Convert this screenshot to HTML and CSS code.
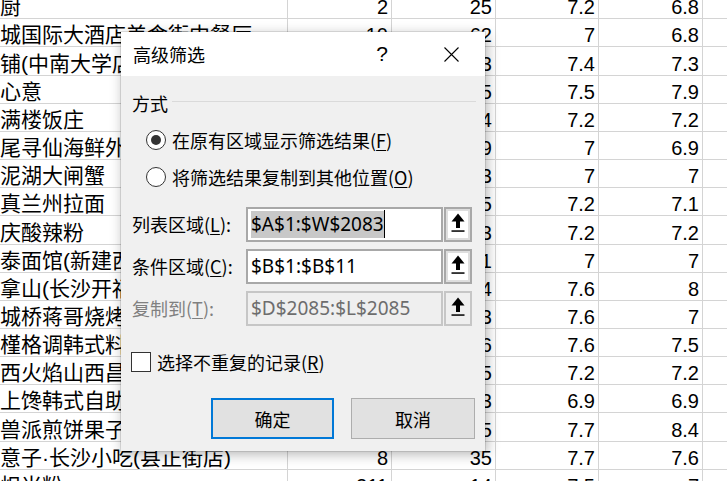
FILE: index.html
```html
<!DOCTYPE html>
<html lang="zh-CN">
<head>
<meta charset="utf-8">
<title>高级筛选</title>
<link rel="stylesheet" href="styles.css">
</head>
<body>
<div class="sheet">
  <div class="row"><div class="c a">厨</div><div class="c n">2</div><div class="c n">25</div><div class="c n">7.2</div><div class="c n">6.8</div><div class="c f"></div></div>
  <div class="row"><div class="c a">城国际大酒店美食街中餐厅</div><div class="c n">10</div><div class="c n">62</div><div class="c n">7</div><div class="c n">6.8</div><div class="c f"></div></div>
  <div class="row"><div class="c a">铺(中南大学店)</div><div class="c n">4</div><div class="c n">23</div><div class="c n">7.4</div><div class="c n">7.3</div><div class="c f"></div></div>
  <div class="row"><div class="c a">心意</div><div class="c n">3</div><div class="c n">45</div><div class="c n">7.5</div><div class="c n">7.9</div><div class="c f"></div></div>
  <div class="row"><div class="c a">满楼饭庄</div><div class="c n">6</div><div class="c n">14</div><div class="c n">7.2</div><div class="c n">7.2</div><div class="c f"></div></div>
  <div class="row"><div class="c a">尾寻仙海鲜外卖</div><div class="c n">2</div><div class="c n">39</div><div class="c n">7</div><div class="c n">6.9</div><div class="c f"></div></div>
  <div class="row"><div class="c a">泥湖大闸蟹</div><div class="c n">5</div><div class="c n">13</div><div class="c n">7</div><div class="c n">7</div><div class="c f"></div></div>
  <div class="row"><div class="c a">真兰州拉面</div><div class="c n">7</div><div class="c n">15</div><div class="c n">7.2</div><div class="c n">7.1</div><div class="c f"></div></div>
  <div class="row"><div class="c a">庆酸辣粉</div><div class="c n">3</div><div class="c n">33</div><div class="c n">7.2</div><div class="c n">7.2</div><div class="c f"></div></div>
  <div class="row"><div class="c a">泰面馆(新建西路店)</div><div class="c n">9</div><div class="c n">11</div><div class="c n">7</div><div class="c n">7</div><div class="c f"></div></div>
  <div class="row"><div class="c a">拿山(长沙开福店)</div><div class="c n">4</div><div class="c n">24</div><div class="c n">7.6</div><div class="c n">8</div><div class="c f"></div></div>
  <div class="row"><div class="c a">城桥蒋哥烧烤</div><div class="c n">6</div><div class="c n">13</div><div class="c n">7.6</div><div class="c n">7</div><div class="c f"></div></div>
  <div class="row"><div class="c a">槿格调韩式料理</div><div class="c n">2</div><div class="c n">16</div><div class="c n">7.6</div><div class="c n">7.5</div><div class="c f"></div></div>
  <div class="row"><div class="c a">西火焰山西昌烧烤</div><div class="c n">8</div><div class="c n">25</div><div class="c n">7.2</div><div class="c n">7.2</div><div class="c f"></div></div>
  <div class="row"><div class="c a">上馋韩式自助烤肉</div><div class="c n">5</div><div class="c n">53</div><div class="c n">6.9</div><div class="c n">6.9</div><div class="c f"></div></div>
  <div class="row"><div class="c a">兽派煎饼果子</div><div class="c n">3</div><div class="c n">15</div><div class="c n">7.7</div><div class="c n">8.4</div><div class="c f"></div></div>
  <div class="row"><div class="c a">意子·长沙小吃(县正街店)</div><div class="c n">8</div><div class="c n">35</div><div class="c n">7.7</div><div class="c n">7.6</div><div class="c f"></div></div>
  <div class="row"><div class="c a">炽米粉</div><div class="c n">211</div><div class="c n">14</div><div class="c n">7.5</div><div class="c n">7</div><div class="c f"></div></div>
</div>

<div class="dlg">
  <div class="titlebar">
    <span class="title">高级筛选</span>
    <span class="help">?</span>
    <svg class="close" width="15" height="15" viewBox="0 0 15 15"><path d="M0.5 0.5 L14.5 14.5 M14.5 0.5 L0.5 14.5" stroke="#000" stroke-width="1.1" fill="none"/></svg>
  </div>
  <div class="body">
    <div class="group"><span>方式</span><div class="gline"></div></div>
    <div class="opt r1"><span class="radio on"></span><span>在原有区域显示筛选结果(<u>F</u>)</span></div>
    <div class="opt r2"><span class="radio"></span><span>将筛选结果复制到其他位置(<u>O</u>)</span></div>
    <div class="field f1">
      <span class="lbl">列表区域(<u>L</u>):</span>
      <div class="input"><span class="sel">$A$1:$W$2083</span><span class="caret"></span></div>
      <div class="refbtn"><svg width="14" height="19" viewBox="0 0 14 19"><path d="M7 0.5 L13.5 8.5 L0.5 8.5 Z" fill="#000"/><rect x="5" y="8" width="4" height="7" fill="#000"/><rect x="0.5" y="17.3" width="13" height="1.5" fill="#000"/></svg></div>
    </div>
    <div class="field f2">
      <span class="lbl">条件区域(<u>C</u>):</span>
      <div class="input"><span class="txt">$B$1:$B$11</span></div>
      <div class="refbtn"><svg width="14" height="19" viewBox="0 0 14 19"><path d="M7 0.5 L13.5 8.5 L0.5 8.5 Z" fill="#000"/><rect x="5" y="8" width="4" height="7" fill="#000"/><rect x="0.5" y="17.3" width="13" height="1.5" fill="#000"/></svg></div>
    </div>
    <div class="field f3 disabled">
      <span class="lbl">复制到(<u>T</u>):</span>
      <div class="input"><span class="txt">$D$2085:$L$2085</span></div>
      <div class="refbtn"><svg width="14" height="19" viewBox="0 0 14 19"><path d="M7 0.5 L13.5 8.5 L0.5 8.5 Z" fill="#000"/><rect x="5" y="8" width="4" height="7" fill="#000"/><rect x="0.5" y="17.3" width="13" height="1.5" fill="#000"/></svg></div>
    </div>
    <div class="opt chk"><span class="box"></span><span>选择不重复的记录(<u>R</u>)</span></div>
    <div class="buttons"><button class="btn default">确定</button><button class="btn cancel">取消</button></div>
  </div>
</div>
</body>
</html>
```

FILE: styles.css
```css
html, body {
  margin: 0;
  padding: 0;
  width: 727px;
  height: 481px;
  overflow: hidden;
  background: #fff;
}

.sheet {
  margin-top: -8.9px;
  font-family: "Liberation Sans", "Noto Sans CJK SC", sans-serif;
  color: #000;
}

.row {
  display: grid;
  grid-template-columns: 288px 104px 104px 103px 104px 60px;
  height: 28.17px;
}

.c {
  box-sizing: border-box;
  border-right: 1px solid #d4d4d4;
  border-bottom: 1px solid #d4d4d4;
  display: flex;
  align-items: flex-end;
  padding: 0 3px 1px 1px;
  overflow: hidden;
  white-space: nowrap;
  font-size: 20px;
  line-height: 20px;
}

.a {
  font-size: 21px;
  line-height: 21px;
  padding-left: 0;
}

.n {
  justify-content: flex-end;
}

/* dialog */
.dlg {
  position: absolute;
  left: 121px;
  top: 32px;
  width: 364px;
  height: 419px;
  display: flex;
  flex-direction: column;
  background: #f0f0f0;
  box-shadow: 0 0 0 1px rgba(0,0,0,0.10), 2px 3px 12px rgba(0,0,0,0.30);
  font-family: "Noto Sans CJK SC", "Liberation Sans", sans-serif;
  font-size: 18px;
  color: #000;
}

.titlebar {
  height: 44px;
  flex: none;
  background: #fff;
  display: flex;
  align-items: center;
  padding-left: 12px;
}

.title {
  flex: 1;
  line-height: 24px;
}

.help {
  width: 20px;
  text-align: center;
  font-family: "Liberation Sans", sans-serif;
  font-size: 21px;
  line-height: 24px;
}

.close {
  margin-left: 52px;
  margin-right: 26px;
  display: block;
}

.body {
  flex: 1;
  display: flex;
  flex-direction: column;
}

.group {
  margin-top: 15px;
  height: 24px;
  display: flex;
  align-items: center;
  padding-left: 11px;
  padding-right: 9px;
  line-height: 24px;
}

.gline {
  flex: 1;
  height: 1px;
  background: #dadada;
  margin-left: 4px;
  margin-bottom: 4px;
}

.opt {
  height: 24px;
  display: flex;
  align-items: center;
  gap: 6px;
  line-height: 24px;
  white-space: nowrap;
}

.r1 { margin-top: 13px; padding-left: 25px; }
.r2 { margin-top: 12.5px; padding-left: 25px; }
.chk { margin-top: 24.5px; padding-left: 10px; }

.radio {
  box-sizing: border-box;
  width: 20px;
  height: 20px;
  border: 1px solid #333;
  border-radius: 50%;
  background: #fff;
  display: flex;
  align-items: center;
  justify-content: center;
}

.radio.on::after {
  content: "";
  width: 10px;
  height: 10px;
  border-radius: 50%;
  background: #333;
}

.box {
  box-sizing: border-box;
  width: 20px;
  height: 20px;
  border: 1px solid #333;
  background: #fff;
}

u {
  text-underline-offset: 2px;
  text-decoration-thickness: 1px;
}

.field {
  height: 35px;
  display: flex;
  align-items: center;
  padding-left: 11px;
}

.f1 { margin-top: 18px; }
.f2, .f3 { margin-top: 7px; }

.lbl {
  width: 114px;
  line-height: 24px;
  white-space: nowrap;
}

.input {
  box-sizing: border-box;
  width: 197px;
  height: 35px;
  border: 2px solid #a8a8a8;
  background: #fff;
  display: flex;
  align-items: center;
  padding-left: 3px;
  font-family: "Noto Sans", "Liberation Sans", sans-serif;
  font-size: 19px;
  white-space: nowrap;
  overflow: hidden;
}

.sel {
  background: #c8c8c8;
  line-height: 27px;
}

.txt {
  line-height: 27px;
}

.caret {
  width: 1px;
  height: 28px;
  background: #000;
}

.refbtn {
  box-sizing: border-box;
  width: 28px;
  height: 35px;
  margin-left: 1px;
  border: 2px solid #a8a8a8;
  box-shadow: inset 0 0 0 2px #dedede;
  background: #fff;
  display: flex;
  align-items: center;
  justify-content: center;
}

.refbtn svg {
  display: block;
  margin-bottom: 4px;
}

.disabled .lbl {
  color: #808080;
}

.disabled .input {
  background: #efefef;
  border-color: #c6c6c6;
  color: #6d6d6d;
}

.disabled .refbtn {
  background: #efefef;
  border-color: #c6c6c6;
  box-shadow: none;
}

.buttons {
  margin-top: 24px;
  display: flex;
  justify-content: flex-end;
  gap: 17px;
  padding-right: 10px;
}

.btn {
  box-sizing: border-box;
  width: 123px;
  height: 41px;
  margin: 0;
  padding: 0;
  background: #e1e1e1;
  border: 1px solid #adadad;
  font-family: "Noto Sans CJK SC", sans-serif;
  font-size: 18px;
  color: #000;
}

.btn.cancel { width: 124px; }

.btn.default {
  border: 2px solid #0078d7;
}
```
